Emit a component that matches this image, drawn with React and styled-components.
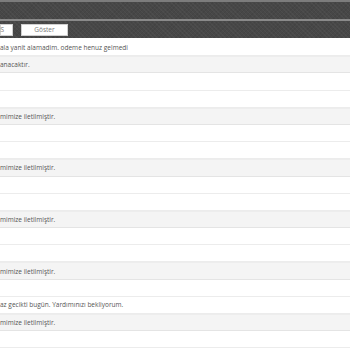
import React from 'react';
import styled, { createGlobalStyle } from 'styled-components';

const GlobalStyle = createGlobalStyle`
  html, body {
    margin: 0;
    padding: 0;
    background: #ffffff;
    font-family: "Open Sans", "Liberation Sans", sans-serif;
  }
`

const Page = styled.div`
  width: 350px;
  height: 350px;
  overflow: hidden;
  display: flex;
  flex-direction: column;
`

const DarkBar = styled.div`
  flex-shrink: 0;
  height: ${props => props.h}px;
  border-top: 2px solid ${props => props.line};
  background-color: #474747;
  background-image:
    repeating-linear-gradient(45deg, rgba(255,255,255,0.035) 0 1px, transparent 1px 3px),
    repeating-linear-gradient(-45deg, rgba(0,0,0,0.06) 0 1px, transparent 1px 3px);
  display: flex;
  align-items: center;
  gap: 8px;
  box-sizing: border-box;
`

const ToolButton = styled.div`
  width: ${props => props.w}px;
  height: 12px;
  background: #ffffff;
  border: 1px solid #d0d0d0;
  box-sizing: border-box;
  display: flex;
  align-items: center;
  justify-content: ${props => props.clip ? 'flex-end' : 'center'};
  padding-right: ${props => props.clip ? '8px' : '0'};
  font-size: 6.5px;
  color: #7a7a7a;
`

const List = styled.div`
  flex-shrink: 0;
  display: flex;
  flex-direction: column;
  padding-top: 1px;
`

const Row = styled.div`
  flex-shrink: 0;
  height: 17.19px;
  box-sizing: border-box;
  border-bottom: 1px solid ${props => props.answer ? '#e4e4e4' : '#ececec'};
  border-top: ${props => props.answer ? '1px solid #ededed' : 'none'};
  background: ${props => props.answer ? '#f4f4f4' : '#ffffff'};
  display: flex;
  align-items: center;
  font-size: 6.5px;
  color: #555555;
  white-space: nowrap;
`

const rows = [
  { answer: false, text: 'ala yanit alamadim. odeme henuz gelmedi' },
  { answer: true, text: 'anacaktır.' },
  { answer: false, text: '' },
  { answer: false, text: '' },
  { answer: true, text: 'mimize iletilmiştir.' },
  { answer: false, text: '' },
  { answer: false, text: '' },
  { answer: true, text: 'mimize iletilmiştir.' },
  { answer: false, text: '' },
  { answer: false, text: '' },
  { answer: true, text: 'mimize iletilmiştir.' },
  { answer: false, text: '' },
  { answer: false, text: '' },
  { answer: true, text: 'mimize iletilmiştir.' },
  { answer: false, text: '' },
  { answer: false, text: 'az gecikti bugün. Yardımınızı bekliyorum.' },
  { answer: true, text: 'mimize iletilmiştir.' },
  { answer: false, text: '' },
  { answer: false, text: '' },
]

export default function App() {
  return (
    <Page>
      <GlobalStyle />
      <DarkBar h={19} line="#7c7c7c" />
      <DarkBar h={19} line="#8a8a8a">
        <ToolButton w={13} clip>IS</ToolButton>
        <ToolButton w={47}>Göster</ToolButton>
      </DarkBar>
      <List>
        {rows.map((row, i) => (
          <Row key={i} answer={row.answer}>{row.text}</Row>
        ))}
      </List>
    </Page>
  )
}
